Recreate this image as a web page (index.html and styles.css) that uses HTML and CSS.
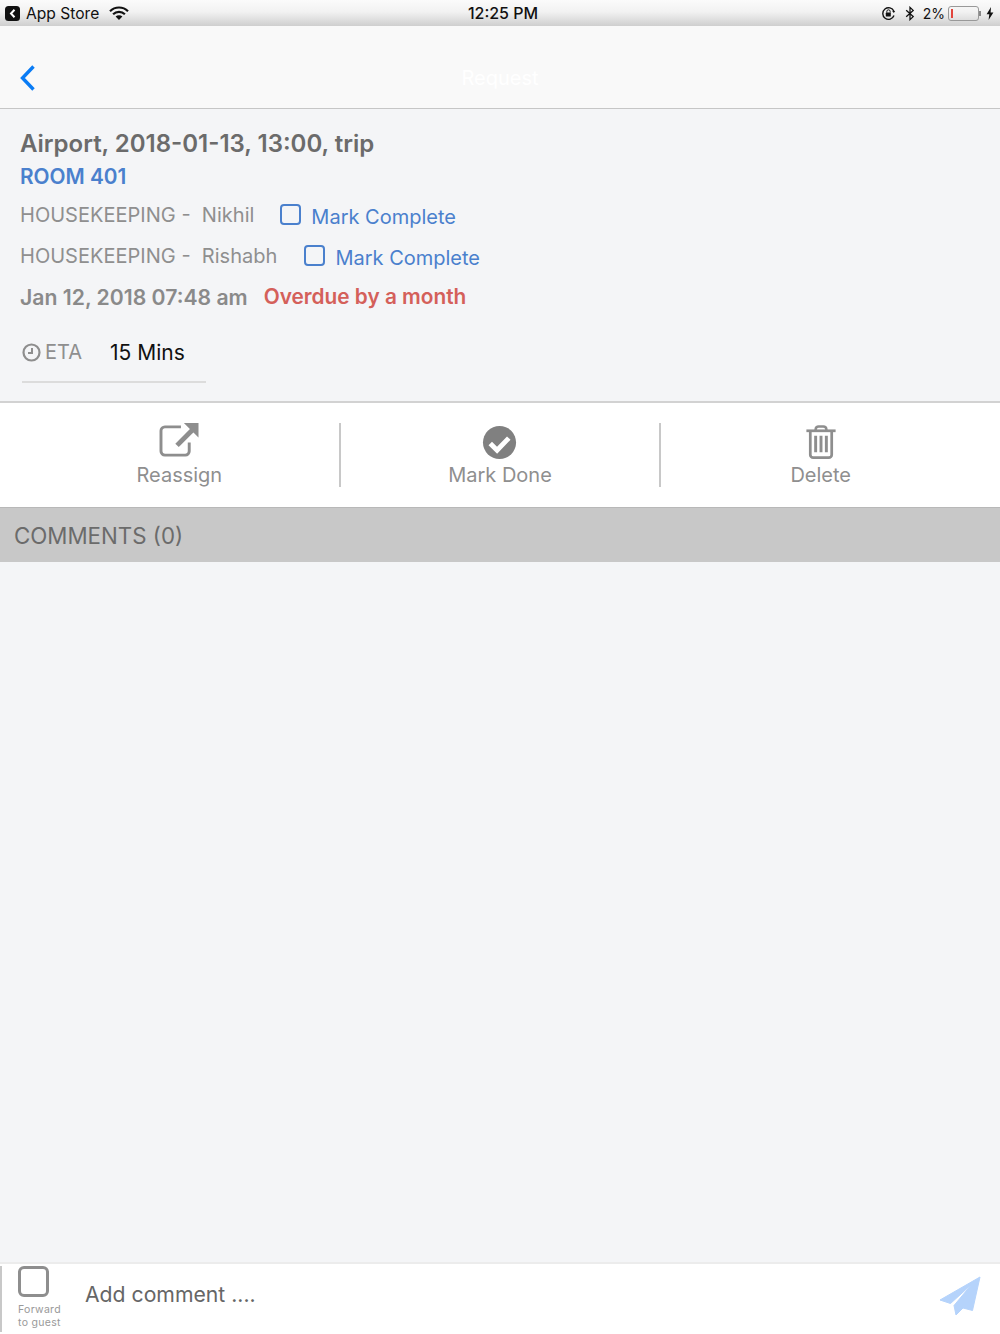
FILE: index.html
```html
<!DOCTYPE html>
<html lang="en">
<head>
  <meta charset="UTF-8">
  <title>Request</title>
  <link rel="stylesheet" href="styles.css">
</head>
<body>
  <div class="status-bar">
    <div class="status-left">
      <svg class="back-badge" width="17" height="17" viewBox="0 0 17 17"><rect x="1" y="1" width="15" height="15" rx="3.5" fill="#111"/><path d="M10.5 4.8 7 8.5l3.5 3.7" fill="none" stroke="#fff" stroke-width="2"/></svg>
      <span class="status-app">App Store</span>
      <svg class="wifi" width="20" height="15" viewBox="0 0 20 15"><path d="M1 5.2a12.8 12.8 0 0 1 18 0" fill="none" stroke="#111" stroke-width="2.2"/><path d="M4.1 8.2a8.4 8.4 0 0 1 11.8 0" fill="none" stroke="#111" stroke-width="2.2"/><path d="M6.6 10.6 10 14l3.4-3.4a4.8 4.8 0 0 0-6.8 0z" fill="#111"/></svg>
    </div>
    <div class="status-time">12:25 PM</div>
    <div class="status-right">
      <svg width="15" height="15" viewBox="0 0 15 15"><path d="M12.9 5.2A5.8 5.8 0 1 0 13 9.6" fill="none" stroke="#111" stroke-width="1.4"/><path d="M11.2 5h3l-1.4 2z" fill="#111"/><rect x="4.8" y="6.6" width="5" height="4" rx=".6" fill="#111"/><path d="M5.8 6.6V5.5a1.7 1.7 0 0 1 3.4 0v1.1" fill="none" stroke="#111"/></svg>
      <svg class="bt" width="10" height="15" viewBox="0 0 10 15"><path d="M1.2 4.2 8.2 10.6 5 13.6V1.4l3.2 3L1.2 10.8" fill="none" stroke="#111" stroke-width="1.3"/></svg>
      <span class="status-pct">2%</span>
      <div class="battery"><div class="battery-level"></div></div>
      <div class="battery-tip"></div>
      <svg width="8" height="13" viewBox="0 0 8 13"><path d="M5 0 .6 7.2h2.7L2.6 13 7.4 5.4H4.6z" fill="#111"/></svg>
    </div>
  </div>

  <div class="nav-bar">
    <svg class="nav-back" width="20" height="30" viewBox="0 0 20 30"><path d="M15.5 3.5 4.5 15l11 11.5" fill="none" stroke="#0a7cf5" stroke-width="3.4"/></svg>
    <div class="nav-title">Request</div>
  </div>

  <div class="details">
    <div class="trip-title">Airport, 2018-01-13, 13:00, trip</div>
    <div class="room">ROOM 401</div>
    <div class="staff-row">
      <span class="staff">HOUSEKEEPING -&nbsp; Nikhil</span>
      <span class="checkbox"></span>
      <span class="mark">Mark Complete</span>
    </div>
    <div class="staff-row">
      <span class="staff">HOUSEKEEPING -&nbsp; Rishabh</span>
      <span class="checkbox checkbox-wide"></span>
      <span class="mark">Mark Complete</span>
    </div>
    <div class="date-row">
      <span class="date">Jan 12, 2018 07:48 am</span>
      <span class="overdue">Overdue by a month</span>
    </div>
    <div class="eta-row">
      <svg width="19" height="19" viewBox="0 0 19 19"><circle cx="9.5" cy="9.5" r="8" fill="none" stroke="#8e8e8e" stroke-width="2.2"/><path d="M10 5v5H6" fill="none" stroke="#8e8e8e" stroke-width="2"/></svg>
      <span class="eta-label">ETA</span>
      <span class="eta-value">15 Mins</span>
    </div>
  </div>

  <div class="actions">
    <div class="action">
      <svg class="action-icon" width="42" height="38" viewBox="0 0 42 38"><path d="M31.5 20v9a4 4 0 0 1-4 4H6.500a4 4 0 0 1-4-4V8a4 4 0 0 1 4-4H23" fill="none" stroke="#8e8e8e" stroke-width="3"/><path d="M19 23 35 7" fill="none" stroke="#8e8e8e" stroke-width="5"/><path d="M26 0h15v15z" fill="#8e8e8e"/></svg>
      <span>Reassign</span>
    </div>
    <div class="action">
      <svg class="action-icon" width="42" height="38" viewBox="0 0 42 38"><circle cx="20.500" cy="20" r="17" fill="#808080"/><path d="m11 21 7 7 12-12.500" fill="none" stroke="#fff" stroke-width="5"/></svg>
      <span>Mark Done</span>
    </div>
    <div class="action">
      <svg class="action-icon" width="42" height="38" viewBox="0 0 42 38"><path d="M6 8h30" stroke="#8e8e8e" stroke-width="2.800"/><path d="M15.500 8V6.500a3 3 0 0 1 3-3h5a3 3 0 0 1 3 3V8" fill="none" stroke="#8e8e8e" stroke-width="2.600"/><path d="M10 8v24.500a3 3 0 0 0 3 3h16a3 3 0 0 0 3-3V8" fill="none" stroke="#8e8e8e" stroke-width="2.800"/><path d="M15.500 13v17M21 13v17M26.500 13v17" stroke="#8e8e8e" stroke-width="3"/></svg>
      <span>Delete</span>
    </div>
  </div>

  <div class="comments-head">COMMENTS (0)</div>
  <div class="comments-body"></div>

  <div class="footer">
    <div class="forward">
      <span class="forward-box"></span>
      <span class="forward-text">Forward<br>to guest</span>
    </div>
    <div class="comment-input">Add comment ....</div>
    <svg class="send" width="42" height="40" viewBox="0 0 42 40"><path d="M41 1 1 24l10.500 3.500L33 8 15 29.500 17 39l7-7 9.500 2.500z" fill="#b5d3fb" stroke="#b5d3fb" stroke-linejoin="round"/></svg>
  </div>
</body>
</html>
```

FILE: styles.css
```css
* { box-sizing: border-box; }
body { margin: 0; height: 1334px; display: flex; flex-direction: column; font-family: Inter, "Liberation Sans", sans-serif; background: #f4f5f7; overflow: hidden; }

.status-bar { height: 26px; padding: 0 6px 0 4px; display: flex; align-items: center; justify-content: space-between; position: relative; font-size: 15.6px; color: #111; background: linear-gradient(#fbfbfb, #f2f2f2 45%, #cfcfcf); }
.status-left, .status-right { display: flex; align-items: center; }
.status-app { margin-left: 5px; }
.wifi { margin-left: 10px; }
.status-time { position: absolute; left: 6px; right: 0; text-align: center; font-size: 16px; font-weight: 500; }
.status-right { font-size: 14px; }
.bt { margin-left: 9px; margin-right: 2px; }
.status-pct { margin-left: 6px; }
.battery { width: 31px; height: 15px; margin-left: 3px; padding: 2px; border: 1px solid #999; border-radius: 3px; }
.battery-level { width: 2px; height: 100%; background: #e2453c; }
.battery-tip { width: 2px; height: 5px; margin-right: 5px; background: #888; }

.nav-bar { height: 83px; padding: 22px 0 0 18px; display: flex; align-items: center; position: relative; background: #f9f9f9; border-bottom: 1px solid #c6c6c6; }
.nav-title { position: absolute; left: 0; right: 0; top: 40px; text-align: center; font-size: 20px; color: #fff; }

.details { height: 294px; padding: 19px 20px 0; background: #f4f5f7; border-bottom: 2px solid #d2d2d2; }
.trip-title { font-size: 24px; line-height: 32px; font-weight: 600; color: #6b6b6b; }
.room { margin-top: 1px; font-size: 20.8px; line-height: 32px; font-weight: 600; color: #4a80cd; }
.staff-row { height: 41px; padding-top: 2px; display: flex; align-items: center; }
.staff { font-size: 20.05px; color: #8f8f8f; }
.checkbox { width: 21px; height: 21px; margin: -1px 0 0 26px; border: 2px solid #4a80cd; border-radius: 4px; }
.checkbox-wide { margin-left: 27px; }
.mark { margin: 4px 0 0 10px; font-size: 20px; color: #4a80cd; }
.date-row { margin-top: 6px; display: flex; font-weight: 600; line-height: 32px; }
.date { font-size: 21.2px; color: #8a8a8a; }
.overdue { margin-left: 16px; font-size: 20.8px; color: #d4605a; }
.eta-row { width: 184px; height: 52px; margin: 18px 0 0 2px; padding-top: 9px; display: flex; align-items: flex-start; border-bottom: 2px solid #dcdcdc; }
.eta-row svg { margin-top: 3px; }
.eta-label { margin-left: 4px; font-size: 20px; color: #8f8f8f; }
.eta-value { margin-left: 28px; font-size: 21px; color: #111; }

.actions { height: 104px; padding: 20px; display: flex; background: #fff; }
.action { flex: 1; display: flex; flex-direction: column; align-items: center; font-size: 20px; color: #8f8f8f; border-right: 2px solid #c8c8c8; }
.action:last-child { border-right: 0; }
.action-icon { margin-bottom: 3px; }

.comments-head { height: 55px; padding-left: 14px; display: flex; align-items: center; font-size: 22.3px; color: #6b6b6b; background: #c8c8c8; border-top: 1px solid #b8b8b8; }
.comments-body { flex: 1; }

.footer { height: 72px; padding: 0 19px 0 0; display: flex; align-items: center; background: #fff; border-top: 2px solid #ececec; }
.forward { width: 64px; height: 66px; padding: 0 0 0 16px; display: flex; flex-direction: column; border-left: 2px solid #c8c8c8; }
.forward-box { width: 31px; height: 31px; border: 3px solid #8e8e8e; border-radius: 6px; }
.forward-text { margin-top: 6px; font-size: 10.5px; line-height: 13px; letter-spacing: .3px; color: #999; white-space: nowrap; }
.comment-input { flex: 1; margin: -11px 0 0 21px; font-size: 21.2px; color: #666; }
.send { margin-top: -6px; }
```
